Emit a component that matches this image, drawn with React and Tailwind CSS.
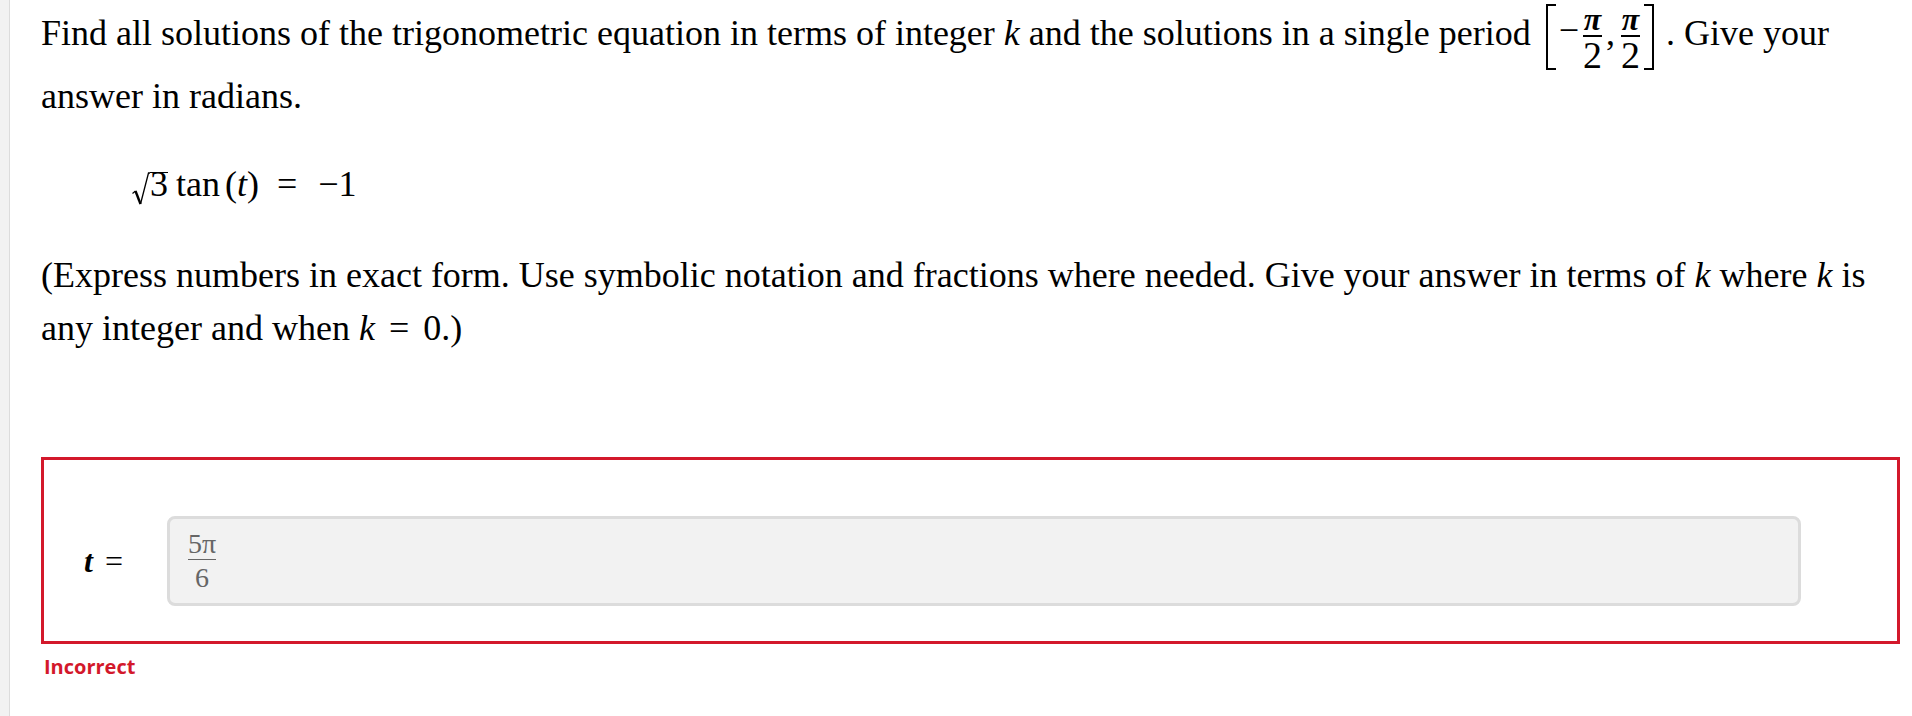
function Frac({ num, den }) {
  return (
    <span className="mt-[3.5px] flex flex-col items-center self-start px-[4px]">
      <span className="text-[32px] font-bold italic leading-[22px]">{num}</span>
      <span className="mt-[5px] h-[2px] w-full bg-black" />
      <span className="mt-[2.5px] text-[38px] leading-[32px]">{den}</span>
    </span>
  );
}

// [ -π/2, π/2 ] drawn as inline block in the first sentence
function Interval() {
  return (
    <span className="ml-[6px] mr-[12px] inline-flex h-[66px] items-center align-middle">
      <span className="h-full w-[10px] border-y-2 border-l-[2.5px] border-black" />
      <span className="mt-[9px] self-start pl-[3px] leading-[35px]">−</span>
      <Frac num="π" den="2" />
      <span className="mt-[12px] self-start pr-[2px] leading-[35px]">,</span>
      <Frac num="π" den="2" />
      <span className="h-full w-[10px] border-y-2 border-r-[2.5px] border-black" />
    </span>
  );
}

function Radical() {
  return (
    <svg width="18" height="34" viewBox="0 0 18 34" className="inline-block align-[-10px]">
      <path d="M0.5 21.5 L3.5 19" stroke="#000" strokeWidth="1.2" fill="none" />
      <path d="M3.5 19 L8.5 32" stroke="#000" strokeWidth="2.4" fill="none" />
      <path d="M8.5 32 L16.5 1 L18 1" stroke="#000" strokeWidth="1.3" fill="none" />
    </svg>
  );
}

export default function App() {
  return (
    <div className="flex min-h-screen bg-white font-['Liberation_Serif','Times_New_Roman',serif] text-black">
      <div className="w-[10px] shrink-0 border-r border-[#dcdcdc] bg-[#f2f2f2]" />
      <main className="flex-1 pl-[31px] pr-[12px] pt-[4px]">
        <p className="text-[36px] leading-[53px]">
          Find all solutions of the trigonometric equation in terms of integer <i>k</i> and the solutions in a single period{' '}
          <Interval />. Give your
          <br />
          answer in radians.
        </p>

        <div className="mt-[35px] pl-[91px] text-[36px] leading-[53px]">
          <Radical />
          <span className="inline-block border-t-[1.5px] border-black leading-[22px]">3</span>
          <span className="ml-[8px]">tan</span>
          <span className="ml-[5px]">
            (<i>t</i>)
          </span>
          <span className="ml-[18px] mr-[21px]">=</span>
          <span>−1</span>
        </div>

        <p className="mt-[38px] text-[36px] leading-[53px]">
          (Express numbers in exact form. Use symbolic notation and fractions where needed. Give your answer in terms of{' '}
          <i>k</i> where <i>k</i> is
          <br />
          any integer and when <i>k</i>
          <span className="mx-[14px]">=</span>0.)
        </p>

        <div className="mt-[102px] flex items-center border-[3px] border-[#d3182b] pb-[35px] pl-[40px] pr-[96px] pt-[56px]">
          <div className="flex w-[83px] shrink-0 items-center text-[32px]">
            <span className="font-bold italic">t</span>
            <span className="ml-[12px]">=</span>
          </div>
          <div className="flex h-[90px] flex-1 items-center rounded-[8px] border-[3px] border-[#dcdcdc] bg-[#f2f2f2] pl-[16px]">
            <span className="flex flex-col items-center px-[2px] text-[28px] text-[#666666]">
              <span className="leading-[24px]">5π</span>
              <span className="mt-[2.5px] h-[1.5px] w-full bg-[#666666]" />
              <span className="mt-[6px] leading-[24px]">6</span>
            </span>
          </div>
        </div>

        <div className="mt-[9px] pl-[3px] font-['Open_Sans',sans-serif] text-[20px] font-bold leading-[28px] text-[#d3182b]">
          Incorrect
        </div>
      </main>
    </div>
  );
}
